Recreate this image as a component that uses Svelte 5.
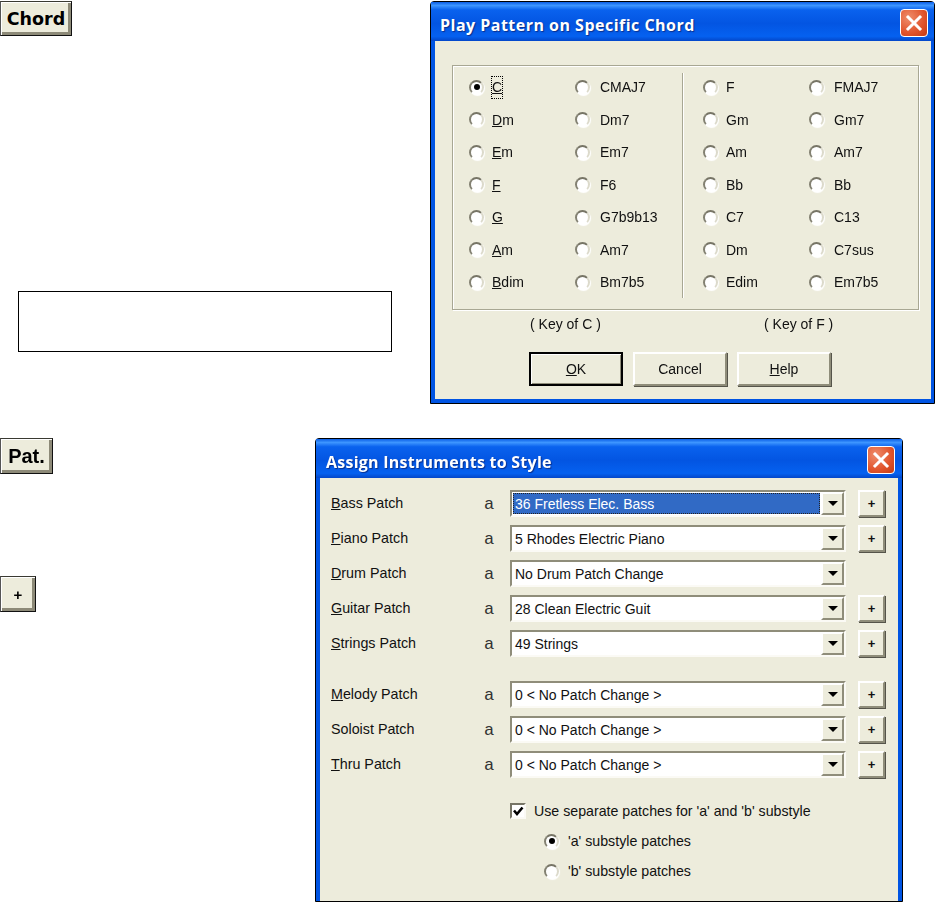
<script>
  // chord columns: first letter of the left column carries the mnemonic
  const keyC = [
    ['C', 'CMAJ7'], ['Dm', 'Dm7'], ['Em', 'Em7'], ['F', 'F6'],
    ['G', 'G7b9b13'], ['Am', 'Am7'], ['Bdim', 'Bm7b5']
  ];
  const keyF = [
    ['F', 'FMAJ7'], ['Gm', 'Gm7'], ['Am', 'Am7'], ['Bb', 'Bb'],
    ['C7', 'C13'], ['Dm', 'C7sus'], ['Edim', 'Em7b5']
  ];

  const patchesTop = [
    { m: 'B', label: 'ass Patch', value: '36 Fretless Elec. Bass', selected: true, plus: true },
    { m: 'P', label: 'iano Patch', value: '5 Rhodes Electric Piano', plus: true },
    { m: 'D', label: 'rum Patch', value: 'No Drum Patch Change', plus: false },
    { m: 'G', label: 'uitar Patch', value: '28 Clean Electric Guit', plus: true },
    { m: 'S', label: 'trings Patch', value: '49 Strings', plus: true }
  ];
  const patchesBottom = [
    { m: 'M', label: 'elody Patch', value: '0 < No Patch Change >', plus: true },
    { m: '', label: 'Soloist Patch', value: '0 < No Patch Change >', plus: true },
    { m: 'T', label: 'hru Patch', value: '0 < No Patch Change >', plus: true }
  ];
</script>

{#snippet closeBtn()}
  <span class="close">
    <svg width="18" height="18" viewBox="0 0 18 18">
      <path d="M3 3 L15 15 M15 3 L3 15" stroke="#fff" stroke-width="3" stroke-linecap="square" fill="none" />
    </svg>
  </span>
{/snippet}

{#snippet patchRow(p)}
  <div class="patch">
    <span class="patch-label"><u>{p.m}</u>{p.label}</span>
    <span class="patch-a">a</span>
    <div class="combo">
      <span class="combo-value" class:selected={p.selected}>{p.value}</span>
      <span class="combo-btn"><i class="arrow"></i></span>
    </div>
    {#if p.plus}<span class="btn plus">+</span>{/if}
  </div>
{/snippet}

<div class="page">
  <section class="row first">
    <div class="left">
      <span class="tool chord">Chord</span>
      <div class="note"></div>
    </div>

    <div class="dialog play">
      <div class="title">
        <span class="title-text">Play Pattern on Specific Chord</span>
        {@render closeBtn()}
      </div>
      <div class="body">
        <div class="group">
          <div class="half">
            {#each keyC as pair, i}
              <label class="radio-item">
                <span class="radio" class:on={i === 0}></span>
                {#if i === 0}
                  <span class="focus"><u>{pair[0][0]}</u></span>
                {:else}
                  <span><u>{pair[0][0]}</u>{pair[0].slice(1)}</span>
                {/if}
              </label>
              <label class="radio-item second">
                <span class="radio"></span>
                <span>{pair[1]}</span>
              </label>
            {/each}
          </div>
          <div class="half right">
            {#each keyF as pair}
              <label class="radio-item">
                <span class="radio"></span>
                <span>{pair[0]}</span>
              </label>
              <label class="radio-item second">
                <span class="radio"></span>
                <span>{pair[1]}</span>
              </label>
            {/each}
          </div>
        </div>
        <div class="keys">
          <span>( Key of C )</span>
          <span>( Key of F )</span>
        </div>
        <div class="actions">
          <span class="btn action default"><span><u>O</u>K</span></span>
          <span class="btn action">Cancel</span>
          <span class="btn action"><span><u>H</u>elp</span></span>
        </div>
      </div>
    </div>
  </section>

  <section class="row second-row">
    <div class="left narrow">
      <span class="tool pat">Pat.</span>
      <span class="tool add">+</span>
    </div>

    <div class="dialog assign">
      <div class="title">
        <span class="title-text">Assign Instruments to Style</span>
        {@render closeBtn()}
      </div>
      <div class="body">
        <div class="patches">
          {#each patchesTop as p}
            {@render patchRow(p)}
          {/each}
        </div>
        <div class="patches lower">
          {#each patchesBottom as p}
            {@render patchRow(p)}
          {/each}
        </div>
        <div class="options">
          <label class="check-line">
            <span class="check">
              <svg width="12" height="12" viewBox="0 0 12 12">
                <path d="M2 5.5 L5 9 L10.5 2.5" stroke="#000" stroke-width="2.6" fill="none" />
              </svg>
            </span>
            <span>Use separate patches for 'a' and 'b' substyle</span>
          </label>
          <label class="radio-line">
            <span class="radio on"></span>
            <span>'a' substyle patches</span>
          </label>
          <label class="radio-line">
            <span class="radio"></span>
            <span>'b' substyle patches</span>
          </label>
        </div>
      </div>
    </div>
  </section>
</div>

<style>
  :global(body) {
    margin: 0;
    background: #fff;
  }

  .page {
    width: 937px;
    height: 902px;
    overflow: hidden;
    font-family: "Liberation Sans", Arial, sans-serif;
    font-size: 14px;
    color: #111;
    filter: blur(0.4px);
  }

  .row {
    display: flex;
  }

  .row.first {
    padding-top: 1px;
    height: 403px;
  }

  .row.second-row {
    margin-top: 34px;
  }

  .left {
    width: 430px;
    flex: none;
    display: flex;
    flex-direction: column;
    align-items: flex-start;
  }

  .left.narrow {
    width: 315px;
  }

  .tool {
    box-sizing: border-box;
    display: flex;
    align-items: center;
    justify-content: center;
    background: #edecdc;
    border: 1px solid;
    border-color: #3a3a32 #111 #111 #555;
    box-shadow: inset 1px 1px 0 #fff, inset -3px -3px 0 #8d8a78;
    font-weight: bold;
    color: #000;
  }

  .chord {
    width: 72px;
    height: 35px;
    font-family: "DejaVu Sans", sans-serif;
    font-size: 17.5px;
  }

  .pat {
    width: 53px;
    height: 36px;
    font-size: 20px;
  }

  .add {
    width: 36px;
    height: 36px;
    margin-top: 102px;
    font-size: 15px;
  }

  .note {
    box-sizing: border-box;
    width: 374px;
    height: 61px;
    margin: 255px 0 0 18px;
    border: 1px solid #000;
    background: #fff;
  }

  .dialog {
    box-sizing: border-box;
    flex: none;
    display: flex;
    flex-direction: column;
    background: #0054e3;
    border: 1px solid #000;
    border-radius: 4px 4px 0 0;
  }

  .dialog.play {
    width: 505px;
    height: 403px;
    padding: 0 3px 4px 4px;
  }

  .dialog.assign {
    width: 588px;
    height: 464px;
    padding: 0 4px 0 4px;
  }

  .title {
    display: flex;
    align-items: center;
    justify-content: space-between;
    height: 39px;
    flex: none;
    margin: 0 -3px 0 -4px;
    padding: 0 6px 0 9px;
    background: linear-gradient(#0a5ee6 0%, #3d95ff 9%, #0a62ee 20%, #0355e2 55%, #0561f0 88%, #0347c9 100%);
    color: #fff;
    font-family: "Open Sans", sans-serif;
    font-weight: 700;
    font-size: 16px;
    letter-spacing: 0.48px;
    text-shadow: 1px 1px 1px #0a2f8c;
  }

  .title-text {
    margin-top: 6px;
  }

  .dialog.assign .title {
    margin: 0 -4px;
    padding: 0 7px 0 10px;
    letter-spacing: 0.25px;
  }

  .close {
    box-sizing: border-box;
    width: 28px;
    height: 28px;
    margin-top: 2px;
    display: flex;
    align-items: center;
    justify-content: center;
    border: 1px solid #fff;
    border-radius: 4px;
    background: radial-gradient(circle at 30% 30%, #ef8d6c, #e0532b 60%, #c33a12);
  }

  .body {
    flex: 1;
    background: #edecdc;
    min-height: 0;
  }

  /* chord dialog */
  .group {
    display: flex;
    box-sizing: border-box;
    width: 467px;
    height: 245px;
    margin: 24px 0 0 17px;
    border: 1px solid #a8a793;
    box-shadow: inset 1px 1px 0 #fff, 1px 1px 0 #fff;
  }

  .half {
    box-sizing: border-box;
    width: 229px;
    height: 225px;
    margin-top: 7px;
    padding: 0 0 0 16px;
    display: grid;
    grid-template-columns: 106px 106px;
    grid-auto-rows: 32.5px;
  }

  .half.right {
    width: auto;
    padding-left: 20px;
    border-left: 1px solid #a8a793;
    box-shadow: inset 1px 0 0 #fff;
  }

  .radio-item {
    display: flex;
    align-items: center;
    gap: 8px;
    margin-top: -4px;
  }

  .radio-item.second {
    gap: 10px;
  }

  .radio {
    box-sizing: border-box;
    flex: none;
    width: 15px;
    height: 15px;
    border-radius: 50%;
    background: #fff;
    border: 2px solid;
    border-color: #777566 #dcdacb #fff #838172;
    box-shadow: 1px 1px 1px #fff;
    position: relative;
  }

  .radio.on::after {
    content: '';
    position: absolute;
    left: 2.5px;
    top: 2.5px;
    width: 6px;
    height: 6px;
    border-radius: 50%;
    background: #000;
  }

  .focus {
    padding: 3px 1px 4px;
    margin: -1px;
    outline: 1px dotted #000;
    outline-offset: -1px;
  }

  .keys {
    display: flex;
    height: 18px;
    margin: 5px 0 0 95px;
    align-items: center;
  }

  .keys span:first-child {
    width: 234px;
  }

  .actions {
    display: flex;
    gap: 10px;
    margin: 19px 0 0 94px;
  }

  .btn {
    box-sizing: border-box;
    display: flex;
    align-items: center;
    justify-content: center;
    background: #edecdc;
    border: 2px solid;
    border-color: #fff #8f8d7a #8f8d7a #fff;
    box-shadow: 1px 1px 0 #55544a;
  }

  .action {
    width: 94px;
    height: 34px;
  }

  .action.default {
    border-color: #000;
    box-shadow: inset 1px 1px 0 #fff, inset -1px -1px 0 #8f8d7a;
  }

  /* patch dialog */
  .patches {
    display: flex;
    flex-direction: column;
    gap: 8px;
    padding: 12px 0 0 11px;
  }

  .patches.lower {
    padding-top: 24px;
  }

  .patch {
    display: flex;
    align-items: center;
    height: 27px;
  }

  .patch-label {
    width: 154px;
    flex: none;
    font-size: 14.3px;
    margin-top: -1px;
  }

  .patch-a {
    width: 25px;
    flex: none;
    font-family: "Liberation Mono", monospace;
    font-size: 17px;
    color: #333;
    margin-top: 1px;
    margin-left: -1px;
    margin-right: 1px;
  }

  .combo {
    box-sizing: border-box;
    display: flex;
    align-items: stretch;
    width: 336px;
    height: 27px;
    flex: none;
    background: #fff;
    border: 2px solid;
    border-color: #8f8d7a #fbfaf5 #fbfaf5 #8f8d7a;
  }

  .combo-value {
    flex: 1;
    padding-left: 3px;
    display: flex;
    align-items: center;
  }

  .combo-value.selected {
    margin: 1px;
    padding-left: 2px;
    background: #316ac5;
    color: #fff;
    outline: 1px dotted #222;
    outline-offset: -1px;
  }

  .combo-btn {
    box-sizing: border-box;
    width: 23px;
    flex: none;
    display: flex;
    align-items: center;
    justify-content: center;
    background: #edecdc;
    border: 2px solid;
    border-color: #fff #8f8d7a #8f8d7a #fff;
  }

  .arrow {
    width: 0;
    height: 0;
    border-left: 5px solid transparent;
    border-right: 5px solid transparent;
    border-top: 5px solid #000;
  }

  .plus {
    width: 27px;
    height: 27px;
    margin-left: 12px;
    font-weight: bold;
    font-size: 13px;
  }

  .options {
    padding: 24px 0 0 190px;
    font-size: 14.2px;
  }

  .check-line {
    display: flex;
    align-items: center;
    gap: 8px;
    height: 18px;
  }

  .check {
    box-sizing: border-box;
    width: 16px;
    height: 16px;
    display: flex;
    align-items: center;
    justify-content: center;
    background: #fff;
    border: 2px solid;
    border-color: #777566 #fbfaf5 #fbfaf5 #777566;
  }

  .radio-line {
    display: flex;
    align-items: center;
    gap: 9px;
    height: 30px;
    padding-left: 34px;
  }

  .check-line + .radio-line {
    margin-top: 6px;
  }
</style>
